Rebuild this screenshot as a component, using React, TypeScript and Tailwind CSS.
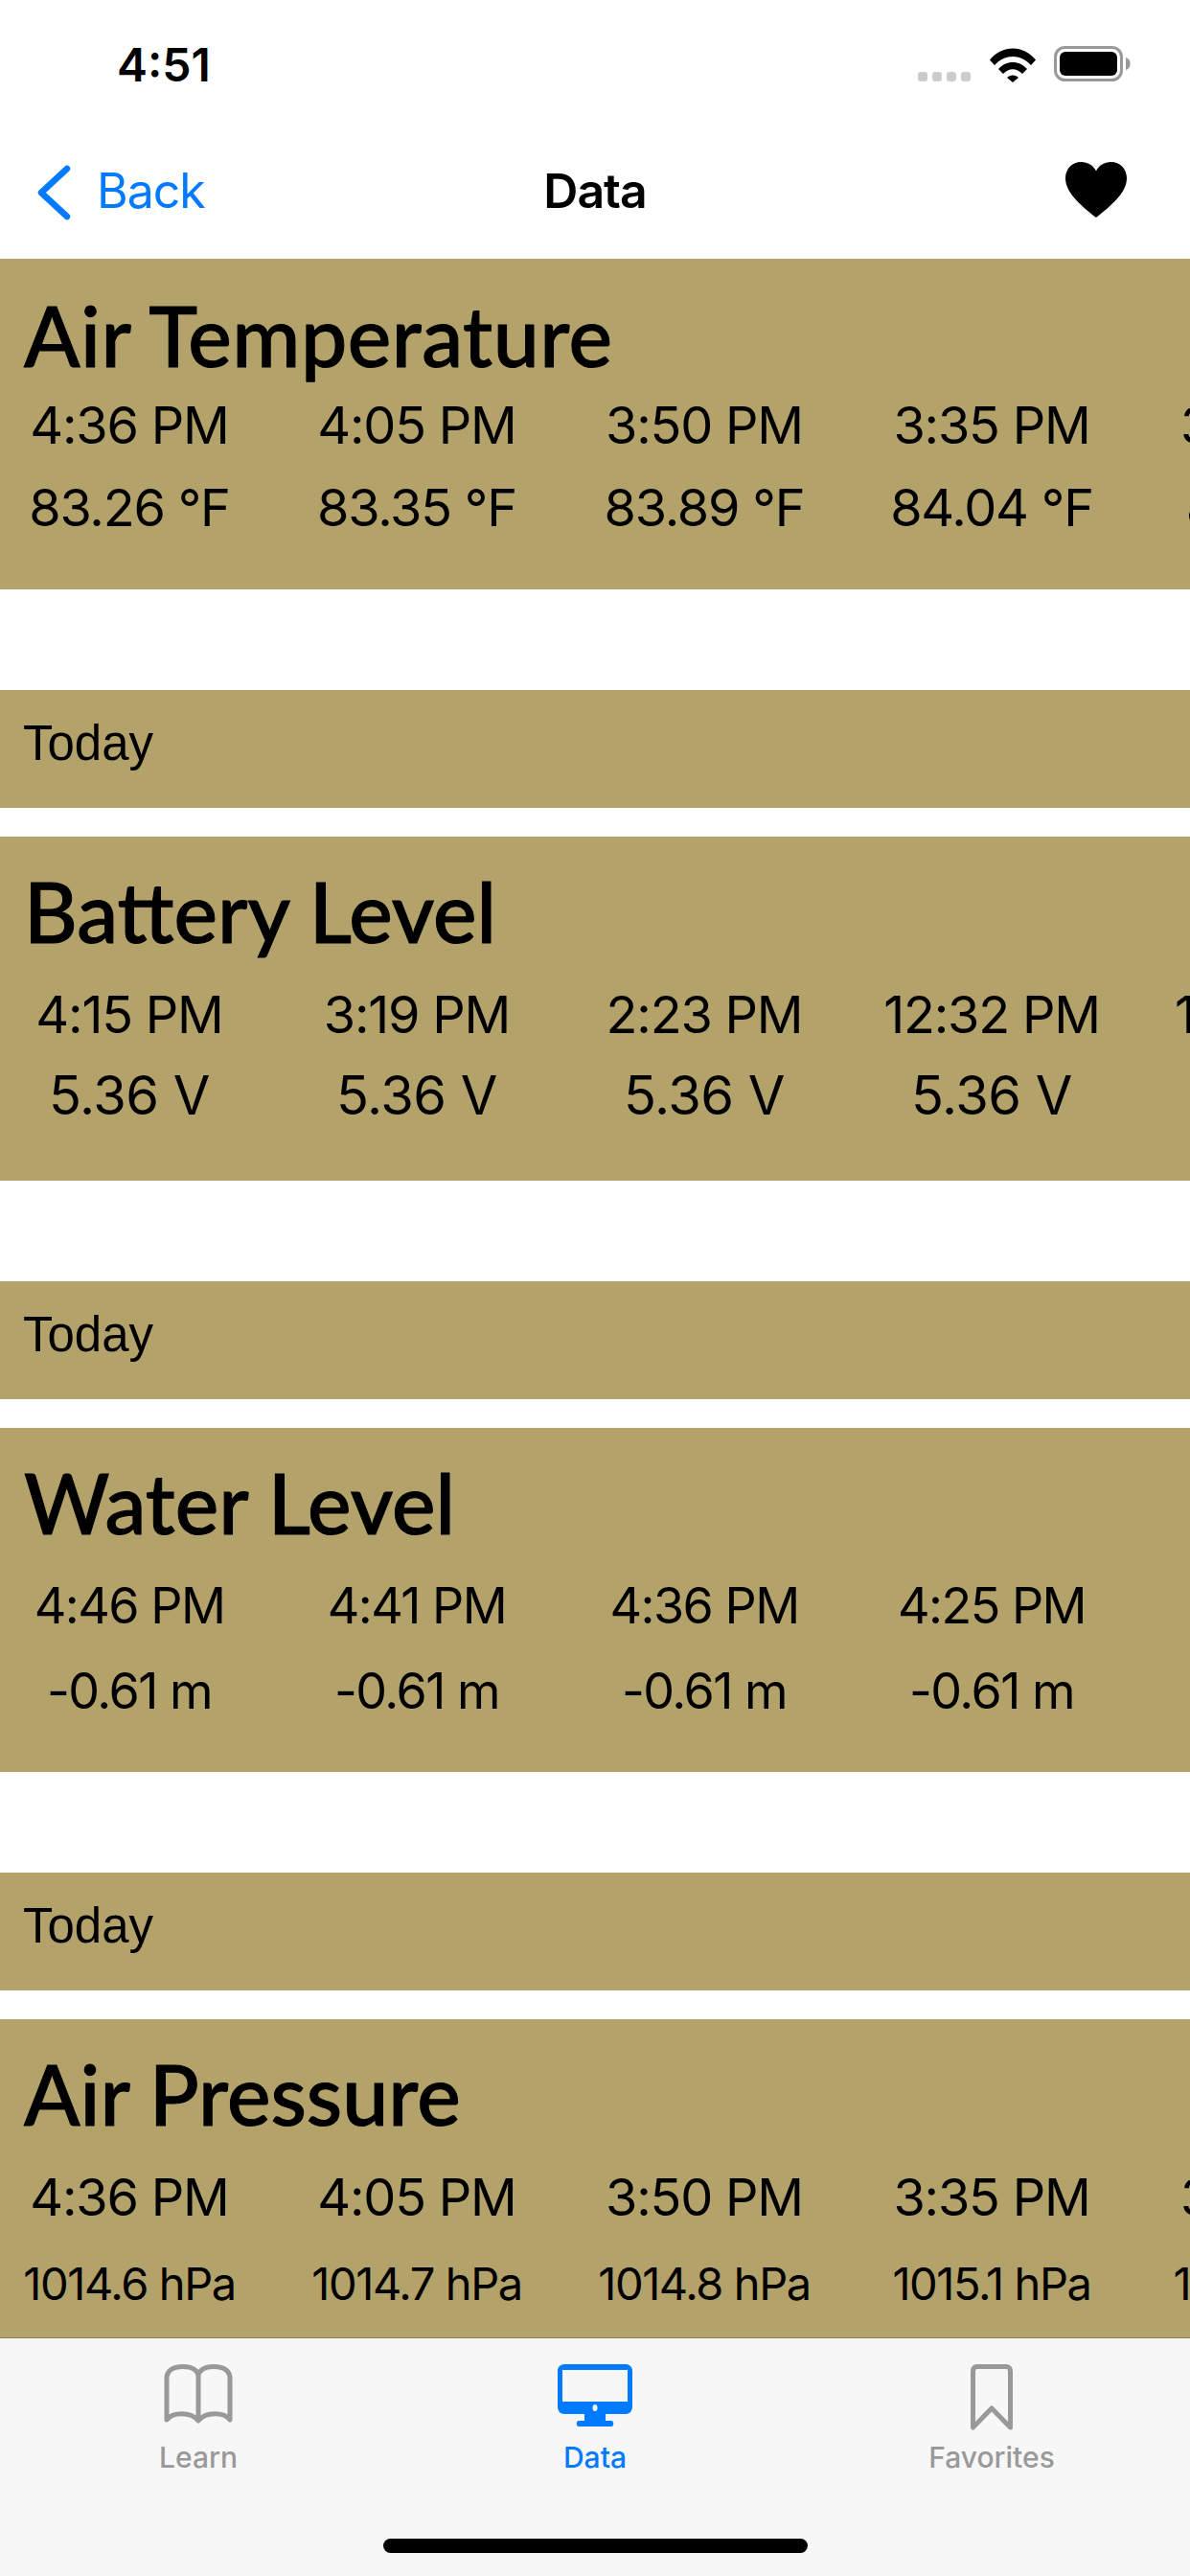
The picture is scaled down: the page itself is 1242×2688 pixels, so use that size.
import React from "react";

interface Reading {
    time: string;
    value: string;
}

interface SensorCardProps {
    title: string;
    readings: Reading[];
    cardClass: string;
    titleClass: string;
    timeClass: string;
    valueClass: string;
}

const airTemperature: Reading[] = [
    { time: "4:36 PM", value: "83.26 °F" },
    { time: "4:05 PM", value: "83.35 °F" },
    { time: "3:50 PM", value: "83.89 °F" },
    { time: "3:35 PM", value: "84.04 °F" },
    { time: "3:20 PM", value: "84.13 °F" },
];

const batteryLevel: Reading[] = [
    { time: "4:15 PM", value: "5.36 V" },
    { time: "3:19 PM", value: "5.36 V" },
    { time: "2:23 PM", value: "5.36 V" },
    { time: "12:32 PM", value: "5.36 V" },
    { time: "11:36 AM", value: "5.36 V" },
];

const waterLevel: Reading[] = [
    { time: "4:46 PM", value: "-0.61 m" },
    { time: "4:41 PM", value: "-0.61 m" },
    { time: "4:36 PM", value: "-0.61 m" },
    { time: "4:25 PM", value: "-0.61 m" },
];

const airPressure: Reading[] = [
    { time: "4:36 PM", value: "1014.6 hPa" },
    { time: "4:05 PM", value: "1014.7 hPa" },
    { time: "3:50 PM", value: "1014.8 hPa" },
    { time: "3:35 PM", value: "1015.1 hPa" },
    { time: "3:20 PM", value: "1015.2 hPa" },
];

const SensorCard: React.FC<SensorCardProps> = ({ title, readings, cardClass, titleClass, timeClass, valueClass }) => (
    <section className={`shrink-0 overflow-hidden bg-[#b3a26a] text-black ${cardClass}`}>
        <h2 className={`pl-[25px] font-['Lato',sans-serif] text-[86px] leading-[100px] font-medium whitespace-nowrap [-webkit-text-stroke:1px_black] ${titleClass}`}>
            {title}
        </h2>
        <div className="flex gap-[30px] font-['Inter',sans-serif]">
            {readings.map((reading, index) => (
                <div key={index} className="flex w-[270px] shrink-0 flex-col items-center whitespace-nowrap">
                    <span className={timeClass}>{reading.time}</span>
                    <span className={valueClass}>{reading.value}</span>
                </div>
            ))}
        </div>
    </section>
);

const TodayBar = () => (
    <div className="mt-[105px] mb-[30px] flex h-[123px] shrink-0 items-center bg-[#b3a26a] pb-[10px] pl-[24px] font-['Liberation_Sans',sans-serif] text-[51px] text-black">
        Today
    </div>
);

const StatusBar = () => (
    <div className="flex h-[132px] items-start justify-between pt-[48px] pr-[62px] pl-[122px]">
        <span className="font-['Inter',sans-serif] text-[48px] leading-[40px] font-semibold text-black">4:51</span>
        <div className="flex items-end">
            <div className="mr-[20px] mb-[1px] flex gap-[5px]">
                <span className="h-[10px] w-[10px] rounded-[3px] bg-[#cccccc]" />
                <span className="h-[10px] w-[10px] rounded-[3px] bg-[#cccccc]" />
                <span className="h-[10px] w-[10px] rounded-[3px] bg-[#cccccc]" />
                <span className="h-[10px] w-[10px] rounded-[3px] bg-[#cccccc]" />
            </div>
            <svg width="48" height="36" viewBox="0 0 48 36" className="mr-[19px]">
                <path d="M0 12.5 C13 -3.5 35 -3.5 48 12.5 L43 18 C32 6 16 6 5 18 Z" fill="#000" />
                <path d="M9 22 C17 12.5 31 12.5 39 22 L34 27 C28 20.5 20 20.5 14 27 Z" fill="#000" />
                <path d="M18 31 C21 27.5 27 27.5 30 31 L24 36 Z" fill="#000" />
            </svg>
            <svg width="80" height="38" viewBox="0 0 80 38">
                <rect x="1.5" y="1.5" width="69" height="34" rx="10" fill="none" stroke="#999999" strokeWidth="3" />
                <rect x="6" y="6" width="60" height="25" rx="6" fill="#000" />
                <path d="M75 12 C78.5 13 79.5 15.5 79.5 18.5 C79.5 21.5 78.5 24 75 25 Z" fill="#999999" />
            </svg>
        </div>
    </div>
);

const NavBar = () => (
    <div className="grid h-[138px] grid-cols-[1fr_auto_1fr] items-center px-[38px] font-['Inter',sans-serif] text-[50px] leading-[60px]">
        <div className="flex items-center gap-[27px] text-[#007aff]">
            <svg width="36" height="58" viewBox="0 0 36 58" fill="none">
                <path d="M32 4 L5 29 L32 54" stroke="#007aff" strokeWidth="6.5" strokeLinecap="round" strokeLinejoin="round" />
            </svg>
            <span className="mb-[5px] tracking-[-1px]">Back</span>
        </div>
        <span className="mb-[5px] font-semibold tracking-[-1px] text-black">Data</span>
        <div className="flex justify-end pr-[28px] pb-[6px]">
            <svg width="64" height="58" viewBox="0 0 64 58">
                <path d="M32 58 C14 44 0 31 0 17 C0 7 7 0 16.500 0 C23 0 29 3.500 32 9.500 C35 3.500 41 0 47.500 0 C57 0 64 7 64 17 C64 31 50 44 32 58 Z" fill="#000" />
            </svg>
        </div>
    </div>
);

const TabBar = () => (
    <nav className="h-[249px] shrink-0 border-t border-[#8a7d52] bg-[#f7f7f7] font-['Inter',sans-serif] text-[30px] leading-[36px] font-medium">
        <div className="grid grid-cols-3 pt-[27px] text-[#999999]">
            <div className="flex flex-col items-center">
                <div className="flex h-[70px] items-start">
                    <svg width="72" height="62" viewBox="0 0 72 62" fill="none" stroke="#999999" strokeWidth="5">
                        <path d="M36 13 C36 6 29 2.500 20 2.500 C9 2.500 3 7 3 15 L3 58 C9 50 28 49 36 59 C44 49 63 50 69 58 L69 15 C69 7 63 2.500 52 2.500 C43 2.500 36 6 36 13 L36 59" strokeLinejoin="round" />
                    </svg>
                </div>
                <span className="mt-[9px]">Learn</span>
            </div>
            <div className="flex flex-col items-center text-[#007aff]">
                <div className="flex h-[70px] items-start">
                    <svg width="78" height="65" viewBox="0 0 78 65">
                        <path d="M7 0 H71 C75 0 78 3 78 7 V44 C78 49 75 52 71 52 H50 V59 H56 C59 59 59 65 56 65 H22 C19 65 19 59 22 59 H28 V52 H7 C3 52 0 49 0 44 V7 C0 3 3 0 7 0 Z" fill="#007aff" />
                        <rect x="5" y="6" width="68" height="33" fill="#f7f7f7" />
                        <ellipse cx="39" cy="45.500" rx="2.500" ry="3.500" fill="#f7f7f7" />
                    </svg>
                </div>
                <span className="mt-[9px]">Data</span>
            </div>
            <div className="flex flex-col items-center">
                <div className="flex h-[70px] items-start">
                    <svg width="44" height="69" viewBox="0 0 44 69" fill="none" stroke="#999999" strokeWidth="5">
                        <path d="M2.500 66 L2.500 7 C2.500 4 4.500 2.500 7 2.500 L37 2.500 C39.500 2.500 41.500 4 41.500 7 L41.500 66 L22 46 L2.500 66 Z" strokeLinejoin="round" />
                    </svg>
                </div>
                <span className="mt-[9px]">Favorites</span>
            </div>
        </div>
        <div className="mx-auto mt-[67px] h-[15px] w-[443px] rounded-full bg-black" />
    </nav>
);

export default function App() {
    return (
        <div className="flex h-[2688px] w-[1242px] flex-col overflow-hidden bg-white">
            <StatusBar />
            <NavBar />
            <main className="flex min-h-0 flex-1 flex-col overflow-hidden">
                <SensorCard
                    title="Air Temperature"
                    readings={airTemperature}
                    cardClass="h-[345px]"
                    titleClass="pt-[30px] tracking-[0.5px]"
                    timeClass="mt-[14px] text-[54px] leading-[60px] tracking-[-1.2px]"
                    valueClass="mt-[26px] text-[54px] leading-[60px] tracking-[-1.2px]"
                />
                <TodayBar />
                <SensorCard
                    title="Battery Level"
                    readings={batteryLevel}
                    cardClass="h-[359px]"
                    titleClass="pt-[28px]"
                    timeClass="mt-[28px] text-[54px] leading-[60px] tracking-[-1.2px]"
                    valueClass="mt-[24px] text-[56px] leading-[60px] tracking-[-0.5px]"
                />
                <TodayBar />
                <SensorCard
                    title="Water Level"
                    readings={waterLevel}
                    cardClass="h-[359px]"
                    titleClass="pt-[28px]"
                    timeClass="mt-[28px] text-[52px] leading-[60px] tracking-[-1.5px]"
                    valueClass="mt-[29px] text-[52px] leading-[60px] tracking-[-1.5px]"
                />
                <TodayBar />
                <SensorCard
                    title="Air Pressure"
                    readings={airPressure}
                    cardClass="h-[359px]"
                    titleClass="pt-[28px]"
                    timeClass="mt-[28px] text-[54px] leading-[60px] tracking-[-1.2px]"
                    valueClass="mt-[30px] text-[47px] leading-[60px] tracking-[-1.4px]"
                />
            </main>
            <TabBar />
        </div>
    );
}
